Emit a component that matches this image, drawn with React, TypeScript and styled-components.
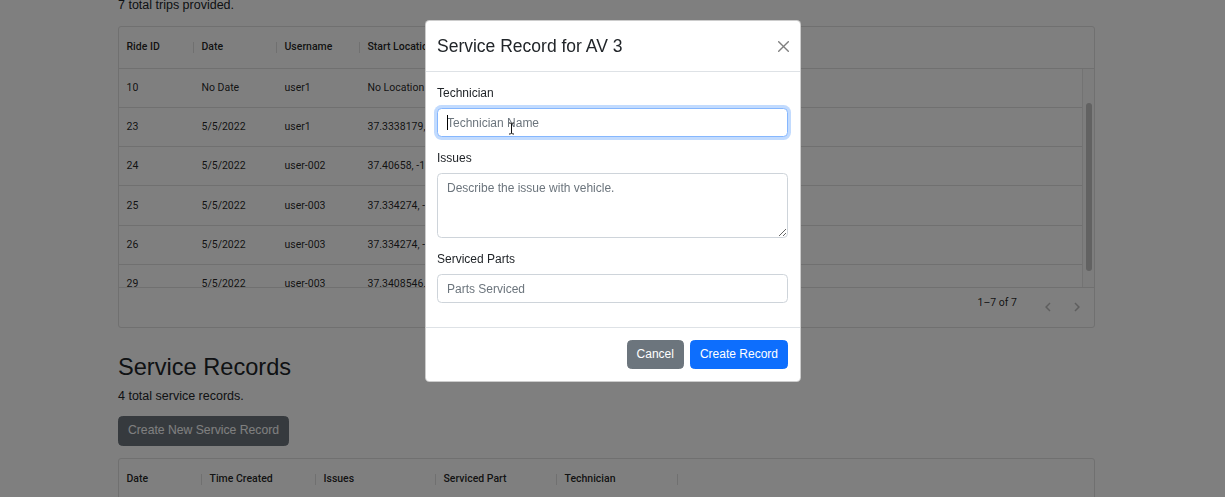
import React from "react";
import styled, { createGlobalStyle } from "styled-components";

const GlobalStyle = createGlobalStyle`
  * { box-sizing: border-box; }
  html, body {
    margin: 0;
    padding: 0;
    background: #fff;
    overflow: hidden;
  }
  body {
    font-family: "Liberation Sans", Arial, sans-serif;
    font-size: 12.5px;
    line-height: 1.5;
    color: #212529;
  }
`;

const Page = styled.main`
  width: 977px;
  margin: -4px 0 0 118px;
`;

const Lead = styled.p<{ $gap: number }>`
  margin: 0 0 ${(p) => p.$gap}px;
`;

const SectionTitle = styled.h2`
  margin: 25px 0 6px;
  font-size: 23.6px;
  font-weight: 500;
  line-height: 1.2;
`;

const DarkButton = styled.button`
  display: block;
  margin: 0 0 12px;
  padding: 4.5px 9px;
  font-family: inherit;
  font-size: 12.2px;
  line-height: 18.75px;
  color: #fff;
  background: #6c757d;
  border: 1px solid #6c757d;
  border-radius: 4.5px;
`;

/* ---- data grid ---- */

const Grid = styled.div`
  border: 1px solid #e0e0e0;
  border-radius: 3px;
  font-family: Roboto, "Liberation Sans", sans-serif;
  font-size: 10.5px;
  color: rgba(0, 0, 0, 0.87);
  overflow: hidden;
`;

const HeaderRow = styled.div`
  display: flex;
  height: 42px;
  border-bottom: 1px solid #e0e0e0;
`;

const HeadCell = styled.div<{ $w: number }>`
  position: relative;
  flex: none;
  width: ${(p) => p.$w}px;
  display: flex;
  align-items: center;
  padding: 0 7.5px;
  font-weight: 500;
  white-space: nowrap;

  &::after {
    content: "";
    position: absolute;
    right: 0;
    top: 15px;
    width: 1px;
    height: 11px;
    background: #e0e0e0;
  }
`;

const BodyArea = styled.div`
  display: flex;
  height: 218px;
`;

const Viewport = styled.div`
  flex: 1;
  overflow: hidden;
`;

const Row = styled.div`
  display: flex;
  height: 39.2px;
  border-bottom: 1px solid #e0e0e0;
`;

const Cell = styled.div<{ $w: number }>`
  flex: none;
  width: ${(p) => p.$w}px;
  display: flex;
  align-items: center;
  padding: 0 7.5px;
  white-space: nowrap;
  overflow: hidden;
`;

const Track = styled.div`
  flex: none;
  width: 12px;
  padding: 34px 2px 0 3px;
  border-left: 1px solid #e6e6e6;
  background: #fbfbfb;
`;

const Thumb = styled.div`
  height: 168px;
  border-radius: 3px;
  background: #c4c4c4;
`;

const GridFooter = styled.div`
  display: flex;
  align-items: center;
  justify-content: flex-end;
  height: 40px;
  padding-right: 3px;
  border-top: 1px solid #e0e0e0;
`;

const PageInfo = styled.span`
  margin: 0 16px 9px 0;
`;

const PagerButton = styled.span`
  display: flex;
  align-items: center;
  justify-content: center;
  width: 29px;
  height: 29px;
  color: rgba(0, 0, 0, 0.26);
`;

/* ---- modal ---- */

const Backdrop = styled.div`
  position: fixed;
  inset: 0;
  background: rgba(0, 0, 0, 0.5);
`;

const Dialog = styled.div`
  position: fixed;
  top: 20px;
  left: 425px;
  width: 376px;
  background: #fff;
  border: 1px solid rgba(0, 0, 0, 0.2);
  border-radius: 4.5px;
  font-size: 12px;
`;

const DialogHeader = styled.div`
  display: flex;
  align-items: center;
  justify-content: space-between;
  padding: 12px 12px 12px 11px;
  border-bottom: 1px solid #dee2e6;
`;

const DialogTitle = styled.h5`
  margin: 0;
  font-size: 17.5px;
  font-weight: 500;
  line-height: 26px;
`;

const CloseButton = styled.button`
  display: flex;
  align-items: center;
  justify-content: center;
  width: 18px;
  height: 18px;
  margin-right: -4px;
  padding: 0;
  background: none;
  border: 0;
`;

const DialogBody = styled.div`
  padding: 12px 12px 12px 11px;
`;

const Field = styled.div`
  margin-bottom: 12px;
`;

const Label = styled.label`
  display: block;
  margin-bottom: 6px;
  line-height: 18px;
`;

const InputWrap = styled.div`
  position: relative;
`;

const controlStyles = `
  display: block;
  width: 100%;
  padding: 4.5px 9px;
  font-family: "Liberation Sans", Arial, sans-serif;
  font-size: 12px;
  line-height: 18px;
  color: #212529;
  background: #fff;
  border: 1px solid #ced4da;
  border-radius: 4.5px;
  outline: none;
  &::placeholder { color: #6c757d; opacity: 1; }
`;

const Input = styled.input<{ $focused?: boolean }>`
  ${controlStyles}
  ${(p) =>
    p.$focused &&
    `border-color: #86b7fe; box-shadow: 0 0 0 3px rgba(13, 110, 253, 0.25);`}
`;

const TextArea = styled.textarea`
  ${controlStyles}
  height: 65px;
  resize: vertical;
`;

const Caret = styled.span`
  position: absolute;
  left: 10px;
  top: 7px;
  width: 1px;
  height: 15px;
  background: #000;
`;

const Pointer = styled.svg`
  position: absolute;
  left: 71px;
  top: 14px;
`;

const DialogFooter = styled.div`
  display: flex;
  justify-content: flex-end;
  padding: 9px;
  border-top: 1px solid #dee2e6;
`;

const Btn = styled.button<{ $tone: "secondary" | "primary" }>`
  margin: 3px;
  padding: 4px 9px 5px;
  font-family: "Liberation Sans", Arial, sans-serif;
  font-size: 12px;
  line-height: 18px;
  color: #fff;
  background: ${(p) => (p.$tone === "primary" ? "#0d6efd" : "#6c757d")};
  border: 1px solid ${(p) => (p.$tone === "primary" ? "#0d6efd" : "#6c757d")};
  border-radius: 4.5px;
`;

type Col = { title: string; w: number };

const tripCols: Col[] = [
  { title: "Ride ID", w: 75 },
  { title: "Date", w: 83 },
  { title: "Username", w: 83 },
  { title: "Start Location", w: 150 },
  { title: "End Location", w: 150 },
  { title: "AV ID", w: 75 },
];

const trips = [
  ["10", "No Date", "user1", "No Location", "No Location", "3"],
  ["23", "5/5/2022", "user1", "37.3338179, -121.8811", "37.3352, -121.8811", "3"],
  ["24", "5/5/2022", "user-002", "37.40658, -121.9789", "37.3352, -121.8811", "3"],
  ["25", "5/5/2022", "user-003", "37.334274, -121.8882", "37.3352, -121.8811", "3"],
  ["26", "5/5/2022", "user-003", "37.334274, -121.8882", "37.3352, -121.8811", "3"],
  ["29", "5/5/2022", "user-003", "37.3408546, -121.8944", "37.3352, -121.8811", "3"],
  ["30", "5/5/2022", "user-003", "37.3408546, -121.8944", "37.3352, -121.8811", "3"],
];

const recordCols: Col[] = [
  { title: "Date", w: 83 },
  { title: "Time Created", w: 114 },
  { title: "Issues", w: 120 },
  { title: "Serviced Part", w: 121 },
  { title: "Technician", w: 121 },
];

const Chevron = ({ dir }: { dir: "left" | "right" }) => (
  <svg width="18" height="18" viewBox="0 0 24 24" fill="currentColor">
    {dir === "left" ? (
      <path d="M15.41 16.59L10.83 12l4.58-4.59L14 6l-6 6 6 6 1.41-1.41z" />
    ) : (
      <path d="M8.59 16.59L13.17 12 8.59 7.41 10 6l6 6-6 6-1.41-1.41z" />
    )}
  </svg>
);

function GridHeader({ cols }: { cols: Col[] }) {
  return (
    <HeaderRow>
      {cols.map((c) => (
        <HeadCell key={c.title} $w={c.w}>
          {c.title}
        </HeadCell>
      ))}
    </HeaderRow>
  );
}

function App() {
  return (
    <>
      <GlobalStyle />
      <Page>
        <Lead $gap={11}>7 total trips provided.</Lead>
        <Grid>
          <GridHeader cols={tripCols} />
          <BodyArea>
            <Viewport>
              {trips.map((r) => (
                <Row key={r[0]}>
                  {r.map((v, i) => (
                    <Cell key={i} $w={tripCols[i].w}>
                      {v}
                    </Cell>
                  ))}
                </Row>
              ))}
            </Viewport>
            <Track>
              <Thumb />
            </Track>
          </BodyArea>
          <GridFooter>
            <PageInfo>1–7 of 7</PageInfo>
            <PagerButton>
              <Chevron dir="left" />
            </PagerButton>
            <PagerButton>
              <Chevron dir="right" />
            </PagerButton>
          </GridFooter>
        </Grid>

        <SectionTitle>Service Records</SectionTitle>
        <Lead $gap={10}>4 total service records.</Lead>
        <DarkButton>Create New Service Record</DarkButton>
        <Grid>
          <GridHeader cols={recordCols} />
        </Grid>
      </Page>

      <Backdrop />
      <Dialog>
        <DialogHeader>
          <DialogTitle>Service Record for AV 3</DialogTitle>
          <CloseButton aria-label="Close">
            <svg width="11" height="11" viewBox="0 0 16 16" fill="#000" fillOpacity="0.5">
              <path d="M.293.293a1 1 0 0 1 1.414 0L8 6.586 14.293.293a1 1 0 1 1 1.414 1.414L9.414 8l6.293 6.293a1 1 0 0 1-1.414 1.414L8 9.414l-6.293 6.293a1 1 0 0 1-1.414-1.414L6.586 8 .293 1.707a1 1 0 0 1 0-1.414z" />
            </svg>
          </CloseButton>
        </DialogHeader>
        <DialogBody>
          <Field>
            <Label>Technician</Label>
            <InputWrap>
              <Input $focused placeholder="Technician Name" />
              <Caret />
              <Pointer width="7" height="13" viewBox="0 0 7 13">
                <path
                  d="M1 1h1.5L3.5 2 4.5 1H6M3.5 2v9M1 12h1.5l1-1 1 1H6"
                  stroke="#111"
                  strokeWidth="1"
                  fill="none"
                />
              </Pointer>
            </InputWrap>
          </Field>
          <Field>
            <Label>Issues</Label>
            <TextArea placeholder="Describe the issue with vehicle." />
          </Field>
          <Field>
            <Label>Serviced Parts</Label>
            <Input placeholder="Parts Serviced" />
          </Field>
        </DialogBody>
        <DialogFooter>
          <Btn $tone="secondary">Cancel</Btn>
          <Btn $tone="primary">Create Record</Btn>
        </DialogFooter>
      </Dialog>
    </>
  );
}

export default App;
